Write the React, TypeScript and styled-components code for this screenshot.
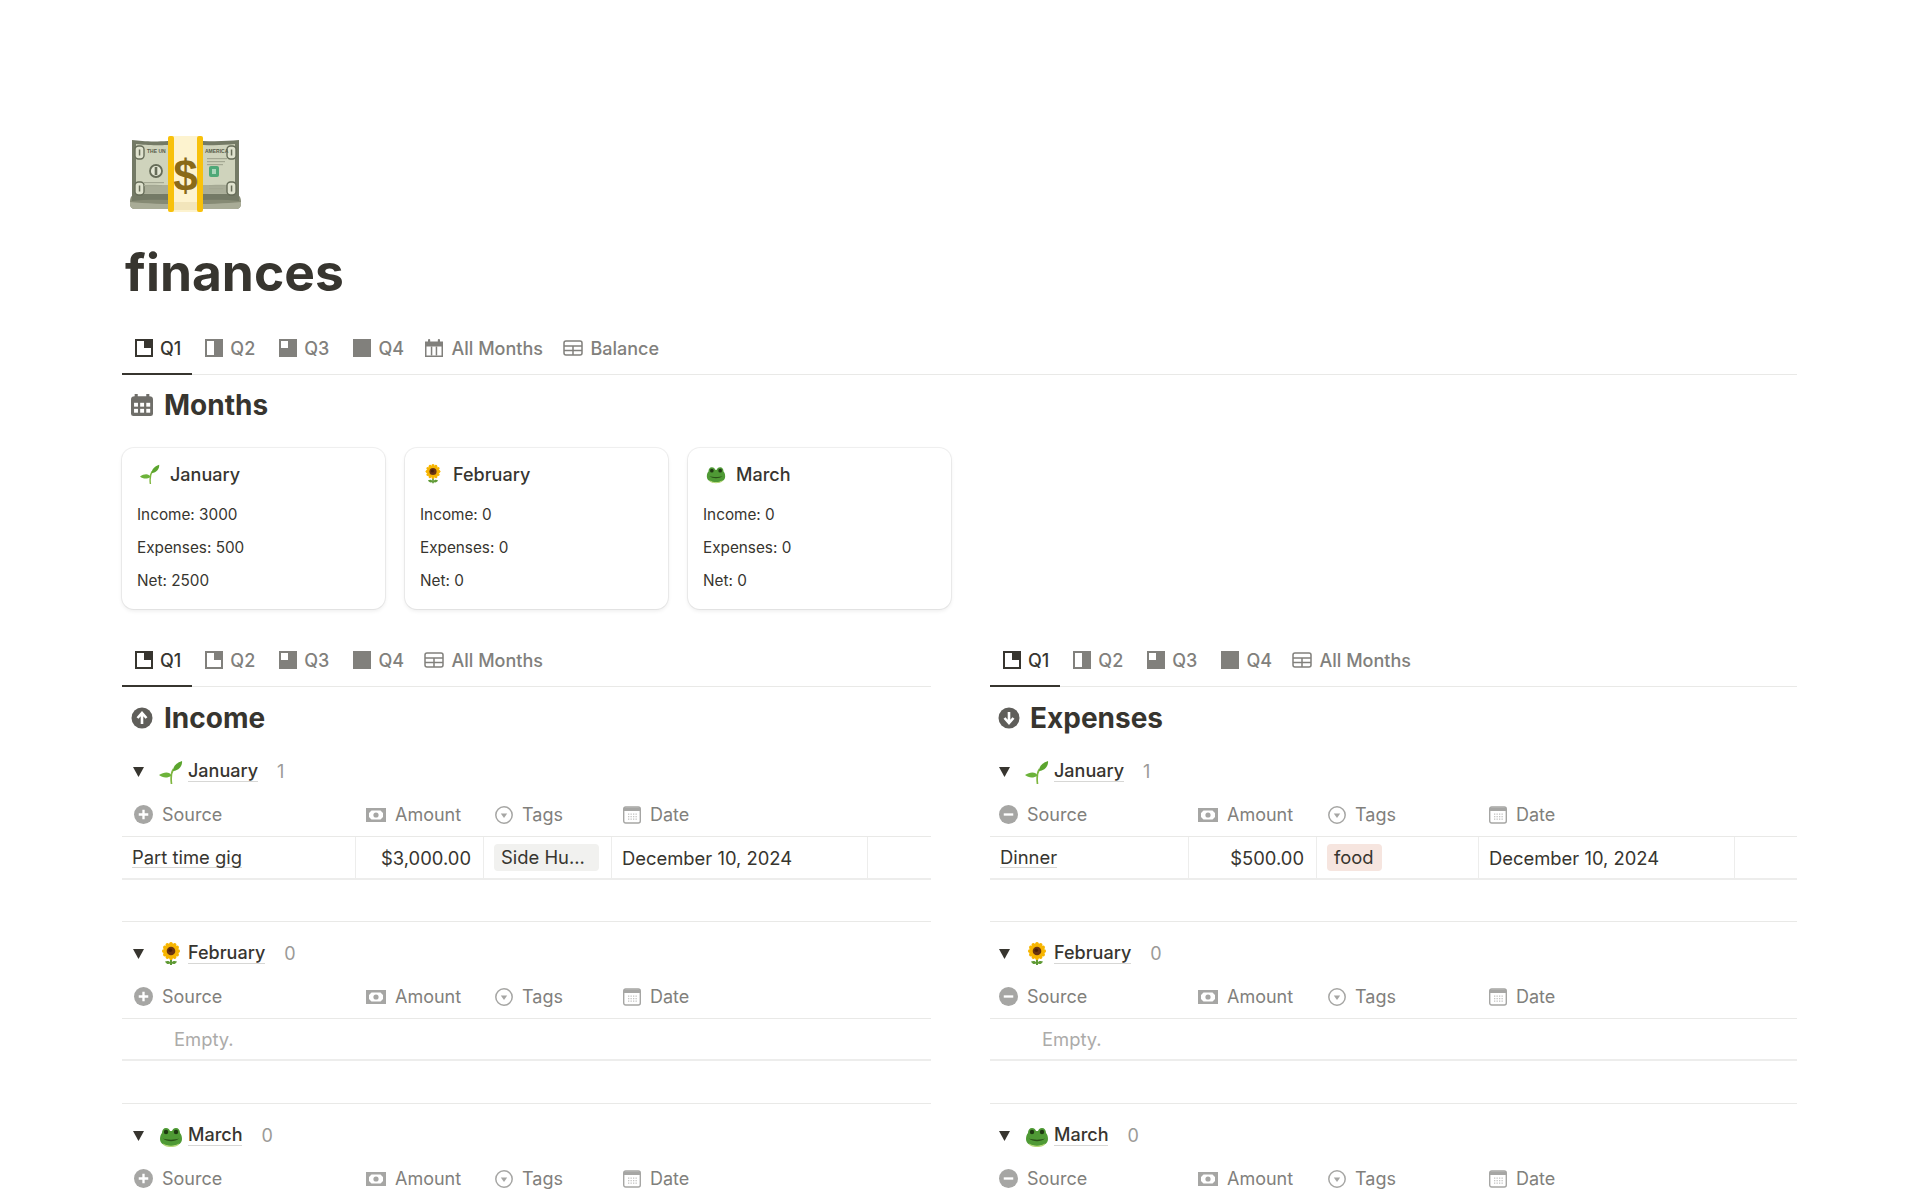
import React from "react";
import styled, { createGlobalStyle } from "styled-components";

const Global = createGlobalStyle`
  html, body { margin: 0; padding: 0; background: #fff; height: 1199px; overflow: hidden; }
  body { font-family: Inter, "Noto Sans", "Liberation Sans", sans-serif; color: #37352f; -webkit-font-smoothing: antialiased; }
  * { box-sizing: border-box; }
`;

const Page = styled.main`
  width: 1920px;
  height: 1199px;
  overflow: hidden;
  padding: 136px 123px 0 122px;
`;
const PageIcon = styled.div`
  display: flex;
  height: 76px;
  padding-left: 7px;
`;
const Title = styled.h1`
  margin: 32px 0 0 3px;
  font-size: 51.5px;
  line-height: 56px;
  font-weight: 700;
  color: #37352f;
`;
const TabBar = styled.div<{ $top: number }>`
  display: flex;
  height: 53px;
  margin-top: ${(p) => p.$top}px;
  padding-top: 4px;
  border-bottom: 1px solid #e9e9e7;
`;
const Tab = styled.div<{ $active?: boolean; $wide?: boolean }>`
  display: flex;
  align-items: center;
  gap: 7.5px;
  height: 49px;
  padding: 0 11px 3px 12.5px;
  margin: 0 0 -1px ${(p) => (p.$wide ? -3.5 : 0)}px;
  font-size: 18px;
  font-weight: 500;
  color: ${(p) => (p.$active ? "#37352f" : "#81807c")};
  border-bottom: 2px solid ${(p) => (p.$active ? "#37352f" : "transparent")};
`;
const Heading = styled.h2<{ $top: number; $left: number; $gap: number }>`
  display: flex;
  align-items: center;
  gap: ${(p) => p.$gap}px;
  height: 36px;
  margin: ${(p) => p.$top}px 0 0 ${(p) => p.$left}px;
  font-size: 28px;
  font-weight: 700;
  color: #37352f;
`;
const Cards = styled.div`
  display: flex;
  gap: 20px;
  margin-top: 25px;
`;
const Card = styled.article`
  width: 263px;
  height: 161px;
  padding: 8px 15px;
  border-radius: 12px;
  background: #fff;
  box-shadow: 0 0 0 1px rgba(15, 15, 15, 0.06), 0 2px 4px rgba(15, 15, 15, 0.08);
`;
const CardTitle = styled.div`
  display: flex;
  align-items: center;
  gap: 10px;
  height: 36px;
  padding-left: 3px;
  font-size: 18px;
  font-weight: 500;
  margin-bottom: 6px;
`;
const CardLine = styled.div`
  height: 33px;
  line-height: 33px;
  font-size: 15.3px;
  color: #37352f;
`;
const Columns = styled.div`
  display: grid;
  grid-template-columns: 809px 807px;
  column-gap: 59px;
  margin-top: 25px;
`;
const Section = styled.section``;
const Group = styled.div<{ $first?: boolean }>`
  margin-top: ${(p) => (p.$first ? 13 : 0)}px;
  padding-bottom: 41px;
  & + & { border-top: 1px solid #e9e9e7; padding-top: 9px; }
`;
const GroupTitle = styled.div<{ $inset: number }>`
  display: flex;
  align-items: center;
  height: 44px;
  padding: 1px 0 0 ${(p) => p.$inset}px;
  font-size: 18px;
  font-weight: 500;
`;
const GroupEmoji = styled.span`
  display: flex;
  justify-content: center;
  width: 24px;
  margin: 0 5px 0 15px;
`;
const GroupName = styled.span`
  border-bottom: 1px solid rgba(55, 53, 47, 0.2);
  line-height: 20px;
`;
const Count = styled.span`
  margin-left: 19px;
  color: #9b9a97;
  font-weight: 400;
`;
const Table = styled.div<{ $cols: string }>`
  --cols: ${(p) => p.$cols};
`;
const HeadRow = styled.div`
  display: grid;
  grid-template-columns: var(--cols);
  height: 44px;
  border-bottom: 1px solid #e9e9e7;
`;
const HeadCell = styled.div<{ $pad: number }>`
  display: flex;
  align-items: center;
  gap: 9px;
  padding-left: ${(p) => p.$pad}px;
  font-size: 18px;
  color: #81807c;
`;
const Row = styled.div`
  display: grid;
  grid-template-columns: var(--cols);
  height: 43px;
  border-bottom: 2px solid #ededec;
`;
const Cell = styled.div<{ $right?: boolean; $pad?: number }>`
  display: flex;
  align-items: center;
  justify-content: ${(p) => (p.$right ? "flex-end" : "flex-start")};
  padding: 0 12px 0 ${(p) => p.$pad ?? 11}px;
  font-size: 18.4px;
  color: #37352f;
  & + & { box-shadow: inset 1px 0 0 #ededec; }
`;
const Underlined = styled.span`
  border-bottom: 1px solid rgba(55, 53, 47, 0.2);
  line-height: 20px;
`;
const Pill = styled.span<{ $bg: string; $w?: number }>`
  display: block;
  ${(p) => (p.$w ? `width: ${p.$w}px;` : "")}
  height: 27px;
  line-height: 27px;
  padding: 0 8px 0 7px;
  border-radius: 4px;
  background: ${(p) => p.$bg};
  white-space: nowrap;
`;
const Empty = styled.div`
  display: flex;
  align-items: center;
  height: 42px;
  margin-bottom: 1px;
  padding-left: 52px;
  font-size: 18.4px;
  color: #acaba9;
  border-bottom: 2px solid #ededec;
`;

/* ---------- drawings ---------- */
const DARK = "#37352f";
const GREY = "#81807c";

type QProps = { v: "q1" | "q2" | "half" | "q3" | "q4"; c: string };
const QuarterIcon = ({ v, c }: QProps) => (
  <svg width="18" height="18" viewBox="0 0 18 18">
    <rect x="1" y="1" width="16" height="16" fill={v === "q4" ? c : "#fff"} stroke={c} strokeWidth="2" />
    {(v === "q1" || v === "q2") && <rect x="9" y="1" width="8" height="8" fill={c} />}
    {v === "half" && <rect x="9" y="1" width="8" height="16" fill={c} />}
    {v === "q3" && (
      <>
        <rect x="9" y="1" width="8" height="16" fill={c} />
        <rect x="1" y="9" width="16" height="8" fill={c} />
      </>
    )}
  </svg>
);
const CalendarOutline = () => (
  <svg width="20" height="20" viewBox="0 0 20 20" fill={GREY}>
    <path d="M1 3.500h18V19H1zM2.500 8.500v9h15v-9z" fillRule="evenodd" />
    <rect x="4" y="1" width="2.200" height="4" rx="1" />
    <rect x="13.800" y="1" width="2.200" height="4" rx="1" />
    <rect x="6.800" y="8.500" width="1.500" height="9" />
    <rect x="11.700" y="8.500" width="1.500" height="9" />
  </svg>
);
const GridIcon = () => (
  <svg width="20" height="18" viewBox="0 0 20 18" fill="none" stroke={GREY} strokeWidth="1.500">
    <rect x="1" y="2" width="18" height="14" rx="2" />
    <path d="M1 7h18M1 11.500h18M10 7v9" />
  </svg>
);
const MonthsIcon = () => (
  <svg width="22" height="22" viewBox="2 1 18 20" preserveAspectRatio="none">
    <path fill="#6f6e69" d="M2 6a3 3 0 0 1 3-3h12a3 3 0 0 1 3 3v13a2 2 0 0 1-2 2H4a2 2 0 0 1-2-2z" />
    <rect x="5" y="1" width="2.500" height="5" fill="#6f6e69" />
    <rect x="14.500" y="1" width="2.500" height="5" fill="#6f6e69" />
    <g fill="#fff">
      {[9, 14.500].map((y) => [4.500, 9.500, 14.500].map((x) => <rect key={`${x}-${y}`} x={x} y={y} width="3.200" height="3.500" />))}
    </g>
  </svg>
);
const ArrowCircle = ({ up }: { up?: boolean }) => (
  <svg width="22" height="22" viewBox="0 0 22 22">
    <circle cx="11" cy="11" r="10.500" fill="#5f5e5a" />
    <path
      d={up ? "M11 17V6.500M6.500 11 11 6l4.500 5" : "M11 5v10.500M6.500 11 11 16l4.500-5"}
      fill="none"
      stroke="#fff"
      strokeWidth="2.600"
    />
  </svg>
);
const SourceIcon = ({ minus }: { minus?: boolean }) => (
  <svg width="19" height="19" viewBox="0 0 18 18">
    <circle cx="9" cy="9" r="9" fill="#a6a6a4" />
    <path d={minus ? "M4.500 9h9" : "M4.500 9h9M9 4.500v9"} stroke="#fff" strokeWidth="2.200" />
  </svg>
);
const AmountIcon = () => (
  <svg width="20" height="16" viewBox="0 0 20 16">
    <path fill="#a6a6a4" fillRule="evenodd" d="M0 1h20v14H0zM5.500 3.500 3 6v4l2.500 2.500h9L17 10V6l-2.500-2.500z" />
    <circle cx="10" cy="8" r="2.600" fill="#a6a6a4" />
  </svg>
);
const TagsIcon = () => (
  <svg width="18" height="18" viewBox="0 0 18 18">
    <circle cx="9" cy="9" r="8.200" fill="none" stroke="#a6a6a4" strokeWidth="1.500" />
    <path d="M5.800 7.500h6.400L9 12z" fill="#a6a6a4" />
  </svg>
);
const DateIcon = () => (
  <svg width="18" height="18" viewBox="0 0 18 18">
    <rect x="0.700" y="1" width="16.600" height="16" rx="2" fill="#fff" stroke="#a6a6a4" strokeWidth="1.400" />
    <rect x="1" y="1.500" width="16" height="3.500" fill="#a6a6a4" />
    <g fill="#c4c4c2">
      {[7.500, 10, 12.500].map((y) => [5, 7.500, 10, 12.500].map((x) => <rect key={`${x}-${y}`} x={x} y={y} width="1.300" height="1.300" />))}
    </g>
  </svg>
);
const Triangle = () => (
  <svg width="11" height="10" viewBox="0 0 11 10">
    <path d="M0 0h11L5.500 10z" fill="#37352f" />
  </svg>
);

const Seedling = ({ size }: { size: number }) => (
  <svg width={size} height={size} viewBox="0 0 24 24">
    <path d="M12.500 24c-.8-6-.6-11 2-15" fill="none" stroke="#7fb640" strokeWidth="1.700" />
    <path d="M14 11c0-4.500 3-8 9-10 .5 5-3 9.500-9 10z" fill="#5ba52e" />
    <path d="M12.500 15.500C11 11.500 5 11.500 0 15c3.500 3 8.500 3.500 12.500.5z" fill="#6cb33a" />
  </svg>
);
const Sunflower = ({ size }: { size: number }) => (
  <svg width={size} height={size} viewBox="0 0 24 24">
    <path d="M12 14v9" stroke="#5f9a35" strokeWidth="2" />
    <path d="M12 21c-1.500-2.500-4-2.500-6-1.500 1 2.500 3.500 3.500 6 1.500zM12 21c1.500-2.500 4-2.500 6-1.500-1 2.500-3.500 3.500-6 1.500z" fill="#5f9a35" />
    <g fill="#f7b500">
      {[0, 30, 60, 90, 120, 150, 180, 210, 240, 270, 300, 330].map((a) => (
        <ellipse key={a} cx="12" cy="2.800" rx="2" ry="2.800" transform={`rotate(${a} 12 9)`} />
      ))}
    </g>
    <circle cx="12" cy="9" r="4.300" fill="#6b3410" />
    <circle cx="11.300" cy="8.300" r="1.800" fill="#47200a" />
  </svg>
);
const Frog = ({ size }: { size: number }) => (
  <svg width={size} height={size} viewBox="0 0 24 24">
    <path d="M1 15c0-3 1-5 2-6 0-3 1.500-5 4-5s3.500 1.500 4 3h2c.5-1.500 1.500-3 4-3s4 2 4 5c1 1 2 3 2 6 0 5-5 7-11 7S1 20 1 15z" fill="#4f9a35" />
    <circle cx="7" cy="8" r="2.200" fill="#1f3a12" />
    <circle cx="17" cy="8" r="2.200" fill="#1f3a12" />
    <path d="M4 14.500c4 3.500 12 3.500 16 0-4 1.500-12 1.500-16 0z" fill="#2a5318" />
    <path d="M4 19.500c5 3 11 3 16 0 0 2-3 3.500-8 3.500s-8-1.500-8-3.500z" fill="#b5d878" />
  </svg>
);

const Corner = ({ x, y }: { x: number; y: number }) => (
  <g>
    <rect x={x} y={y} width="9" height="13" rx="3.500" fill="#dfe2ce" stroke="#666c58" strokeWidth="1.400" />
    <rect x={x + 3.800} y={y + 3.500} width="1.500" height="6" fill="#666c58" />
  </g>
);
const Lines = ({ x, y, w, n }: { x: number; y: number; w: number; n: number }) => (
  <g fill="#a4a893">
    {Array.from({ length: n }, (_, i) => (
      <rect key={i} x={x} y={y + i * 3} width={w - i * 2} height="1.200" />
    ))}
  </g>
);
const MoneyIcon = () => (
  <svg width="113" height="76" viewBox="0 0 113 76">
    <path d="M1 66c0-3 1-6 2-6h107c1 0 2 3 2 6v2c0 3-2 5-5 5H6c-3 0-5-2-5-5z" fill="#868a74" />
    <path d="M1 66c30 3 81 3 111 0v2c0 3-2 5-5 5H6c-3 0-5-2-5-5z" fill="#a9ac97" />
    <path d="M3 4c10 1 18 2 36 1v59c-16-.5-26 0-36 1z" fill="#747a66" />
    <path d="M74 5c16 .5 26 0 36-1v61c-10-1-20-1.500-36-1z" fill="#747a66" />
    <path d="M7 8c9 1 16 1.500 32 1v49c-14-.5-23-.5-32 .5z" fill="#cfd3bc" />
    <path d="M74 9c14 .5 23 0 32-1v50.500c-9-1-18-1-32-.5z" fill="#cfd3bc" />
    <path d="M7 50c10-2 20-1 32-1v9c-14-.5-23-.5-32 .5zM74 49c12 0 22-1 32 1v8.500c-9-1-18-1-32-.5z" fill="#a9ad98" />
    <Corner x={6} y={10} />
    <Corner x={6} y={46} />
    <Corner x={98} y={10} />
    <Corner x={98} y={46} />
    <text x="18" y="17" fontFamily="'Liberation Sans', sans-serif" fontSize="5" fontWeight="700" fill="#565b49">THE UN</text>
    <text x="76" y="17" fontFamily="'Liberation Sans', sans-serif" fontSize="5" fontWeight="700" fill="#565b49">AMERICA</text>
    <circle cx="27" cy="35" r="6" fill="#e3e6d4" stroke="#666c58" strokeWidth="1.800" />
    <rect x="25.700" y="31" width="2.600" height="8" fill="#666c58" />
    <Lines x={15} y={46} w={20} n={2} />
    <rect x="80" y="30" width="10" height="11" rx="2" fill="#4fa878" />
    <rect x="83" y="33" width="4" height="5" fill="#a9d6bb" />
    <Lines x={78} y={22} w={20} n={3} />
    <Lines x={80} y={49} w={16} n={2} />
    <rect x="39" y="0" width="35" height="76" rx="2.500" fill="#fdf3cf" />
    <rect x="39" y="0" width="6" height="76" rx="2" fill="#f8c10b" />
    <rect x="68" y="0" width="6" height="76" rx="2" fill="#f8c10b" />
    <path d="M45 66h23v8H45z" fill="#f2e5bb" />
    <text x="56.500" y="55" textAnchor="middle" fontFamily="'Liberation Sans', sans-serif" fontWeight="700" fontSize="44" fill="#8a6a18">$</text>
  </svg>
);

/* ---------- data ---------- */
type Q = { label: string; icon: React.ReactNode };
const qs = (second: QProps["v"], last: Q[]): Q[] => [
  { label: "Q1", icon: <QuarterIcon v="q1" c={DARK} /> },
  { label: "Q2", icon: <QuarterIcon v={second} c={GREY} /> },
  { label: "Q3", icon: <QuarterIcon v="q3" c={GREY} /> },
  { label: "Q4", icon: <QuarterIcon v="q4" c={GREY} /> },
  ...last,
];
const Tabs = ({ items, top }: { items: Q[]; top: number }) => (
  <TabBar $top={top}>
    {items.map((t, i) => (
      <Tab key={t.label} $active={i === 0} $wide={i >= 4}>
        {t.icon}
        {t.label}
      </Tab>
    ))}
  </TabBar>
);

const months = [
  { name: "January", Icon: Seedling, count: 1, income: 3000, expenses: 500, net: 2500 },
  { name: "February", Icon: Sunflower, count: 0, income: 0, expenses: 0, net: 0 },
  { name: "March", Icon: Frog, count: 0, income: 0, expenses: 0, net: 0 },
];

type Entry = { source: string; amount: string; tag: string; tagBg: string; tagW?: number };
type SectionProps = {
  title: string;
  up?: boolean;
  second: QProps["v"];
  cols: string;
  inset: number;
  pads: number[];
  entry: Entry;
};

const FinanceSection = ({ title, up, second, cols, inset, pads, entry }: SectionProps) => (
  <Section>
    <Tabs items={qs(second, [{ label: "All Months", icon: <GridIcon /> }])} top={0} />
    <Heading $top={13} $left={up ? 9 : 8} $gap={up ? 11 : 10}>
      <ArrowCircle up={up} />
      {title}
    </Heading>
    {months.map((m, i) => (
      <Group key={m.name} $first={i === 0}>
        <GroupTitle $inset={inset}>
          <Triangle />
          <GroupEmoji>
            <m.Icon size={24} />
          </GroupEmoji>
          <GroupName>{m.name}</GroupName>
          <Count>{m.count}</Count>
        </GroupTitle>
        <Table $cols={cols}>
          <HeadRow>
            <HeadCell $pad={pads[0]}>
              <SourceIcon minus={!up} />
              Source
            </HeadCell>
            <HeadCell $pad={pads[1]}>
              <AmountIcon />
              Amount
            </HeadCell>
            <HeadCell $pad={pads[2]}>
              <TagsIcon />
              Tags
            </HeadCell>
            <HeadCell $pad={pads[3]}>
              <DateIcon />
              Date
            </HeadCell>
          </HeadRow>
          {i === 0 && (
            <Row>
              <Cell $pad={10}>
                <Underlined>{entry.source}</Underlined>
              </Cell>
              <Cell $right>{entry.amount}</Cell>
              <Cell>
                <Pill $bg={entry.tagBg} $w={entry.tagW}>
                  {entry.tag}
                </Pill>
              </Cell>
              <Cell>December 10, 2024</Cell>
              <Cell />
            </Row>
          )}
          {i === 1 && <Empty>Empty.</Empty>}
        </Table>
      </Group>
    ))}
  </Section>
);

export default function App() {
  return (
    <Page>
      <Global />
      <PageIcon>
        <MoneyIcon />
      </PageIcon>
      <Title>finances</Title>
      <Tabs
        top={22}
        items={qs("half", [
          { label: "All Months", icon: <CalendarOutline /> },
          { label: "Balance", icon: <GridIcon /> },
        ])}
      />
      <Heading $top={12} $left={9} $gap={11}>
        <MonthsIcon />
        Months
      </Heading>
      <Cards>
        {months.map((m) => (
          <Card key={m.name}>
            <CardTitle>
              <m.Icon size={20} />
              {m.name}
            </CardTitle>
            <CardLine>Income: {m.income}</CardLine>
            <CardLine>Expenses: {m.expenses}</CardLine>
            <CardLine>Net: {m.net}</CardLine>
          </Card>
        ))}
      </Cards>
      <Columns>
        <FinanceSection
          title="Income"
          up
          second="q2"
          cols="233px 128px 128px 256px 64px"
          inset={11}
          pads={[12, 11, 12, 12]}
          entry={{ source: "Part time gig", amount: "$3,000.00", tag: "Side Hu...", tagBg: "#f1f1ef", tagW: 107 }}
        />
        <FinanceSection
          title="Expenses"
          second="half"
          cols="198px 128px 162px 256px 63px"
          inset={9}
          pads={[9, 10, 12, 11]}
          entry={{ source: "Dinner", amount: "$500.00", tag: "food", tagBg: "#f6e5df" }}
        />
      </Columns>
    </Page>
  );
}
